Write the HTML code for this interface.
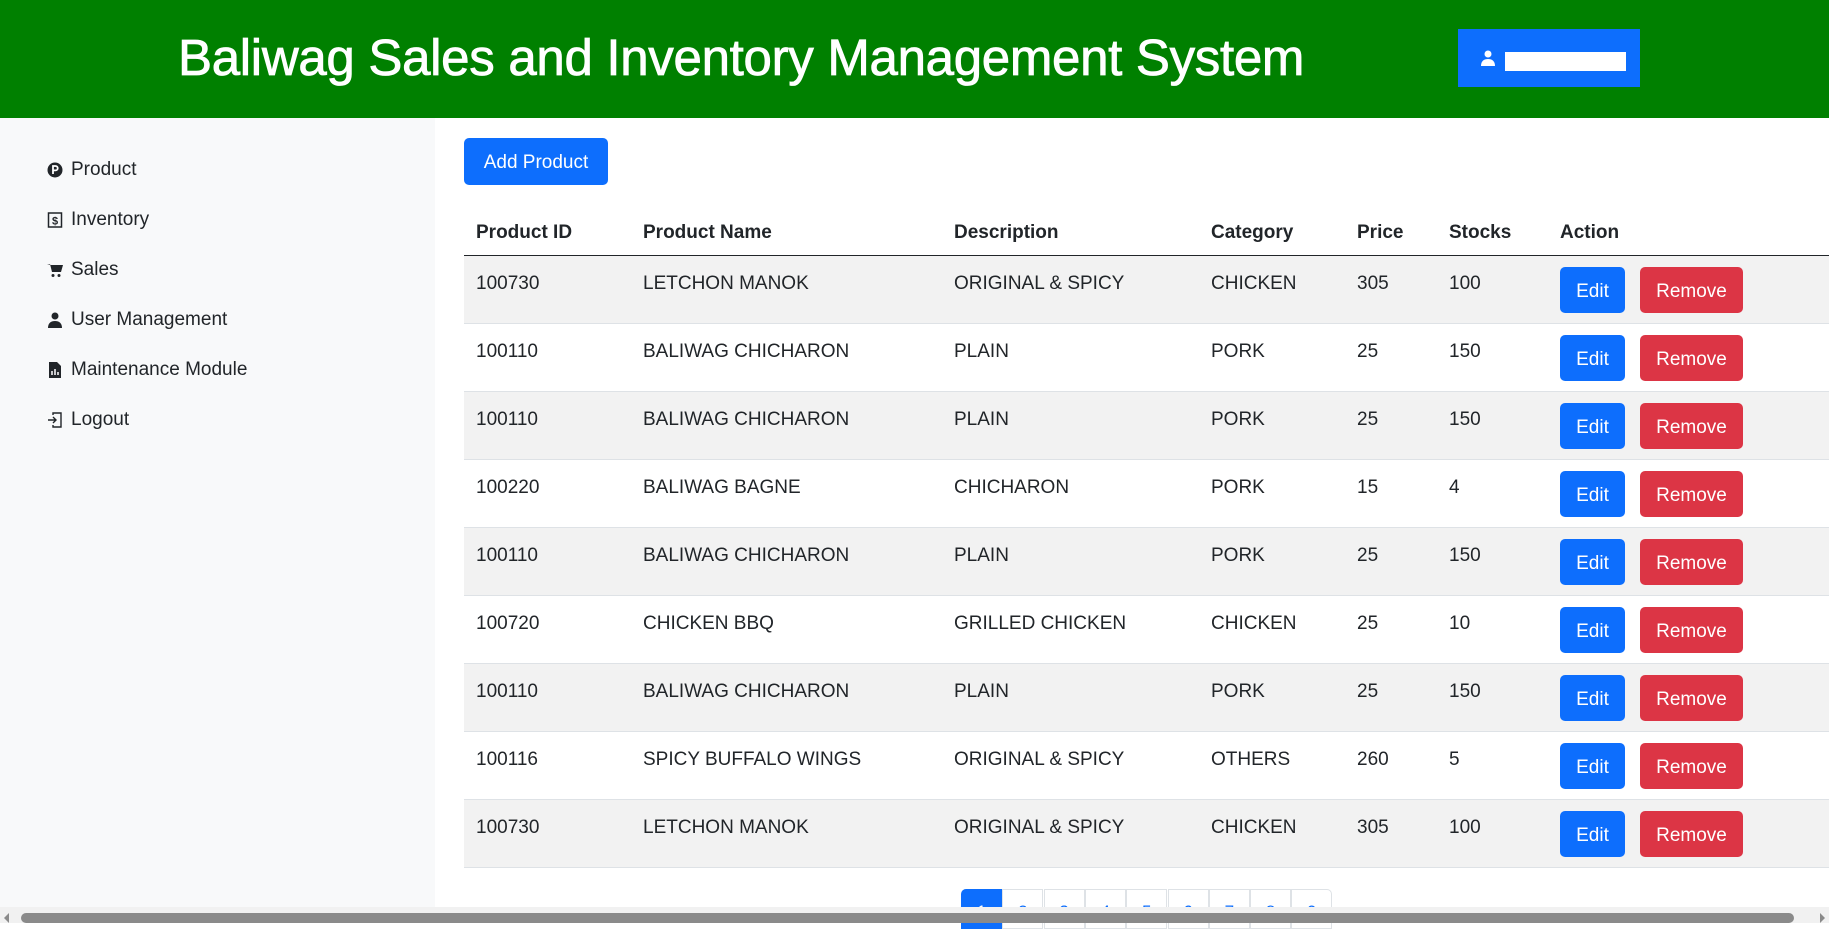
<!DOCTYPE html>
<html><head><meta charset="utf-8"><style>
*{margin:0;padding:0;box-sizing:border-box}
body{width:1829px;height:923px;overflow:hidden;background:#fff;font-family:"Liberation Sans",sans-serif;color:#212529;position:relative}
.hdr{position:absolute;left:0;top:0;width:1829px;height:118px;background:#008000}
.title{position:absolute;left:178px;top:28px;font-size:51px;color:#fff;white-space:nowrap;letter-spacing:-0.3px;-webkit-text-stroke:0.8px #fff}
.ubox{position:absolute;left:1458px;top:29px;width:182px;height:58px;background:#0d6efd}
.side{position:absolute;left:0;top:118px;width:435px;height:805px;background:#f8f9fa}
.nav{position:absolute;left:47px;font-size:19px;display:flex;align-items:center}
.nav svg{width:16px;height:16px;margin-right:8px}
.btn{position:absolute;color:#fff;border-radius:5px;font-size:19px;display:flex;align-items:center;justify-content:center;padding-top:3px}
.blue{background:#0d6efd}.red{background:#dc3545}
.row{position:absolute;left:464px;width:1365px;height:68px;border-bottom:1px solid #dee2e6}
.c{position:absolute;font-size:19px;white-space:nowrap}
.th{font-weight:bold}
.pg{position:absolute;top:889px;height:40px;width:41px;border:1px solid #dee2e6;color:#0d6efd;font-size:17px;text-align:center;padding-top:12px}
</style></head><body>
<div class="hdr">
<div class="title">Baliwag Sales and Inventory Management System</div>
<div class="ubox">
<svg style="position:absolute;left:22px;top:21px" width="16" height="16" viewBox="0 0 16 16"><circle cx="8" cy="4" r="3.5" fill="#fff"/><path d="M1 16c0-5 3-7 7-7s7 2 7 7z" fill="#fff"/></svg>
<div style="position:absolute;left:47px;top:23px;width:121px;height:19px;background:#fff"></div>
</div>
</div>
<div class="side">
<div class="nav" style="top:41px"><svg viewBox="0 0 16 16"><circle cx="8" cy="8" r="7.5" fill="#212529"/><path d="M6 12V4h2.5a2.2 2.2 0 010 4.4H6" stroke="#fff" stroke-width="1.8" fill="none"/></svg>Product</div>
<div class="nav" style="top:91px"><svg viewBox="0 0 16 16"><rect x="1.5" y="1" width="13" height="14" fill="none" stroke="#212529" stroke-width="1.5"/><text x="8" y="12.5" font-size="11" text-anchor="middle" fill="#212529" font-family="Liberation Sans" font-weight="bold">$</text></svg>Inventory</div>
<div class="nav" style="top:141px"><svg viewBox="0 0 16 16"><path d="M0 2h3l2 8h9l2-7H4" fill="#212529"/><circle cx="6" cy="13.5" r="1.5" fill="#212529"/><circle cx="12" cy="13.5" r="1.5" fill="#212529"/></svg>Sales</div>
<div class="nav" style="top:191px"><svg viewBox="0 0 16 16"><circle cx="8" cy="4" r="3.5" fill="#212529"/><path d="M1 16c0-5 3-7 7-7s7 2 7 7z" fill="#212529"/></svg>User Management</div>
<div class="nav" style="top:241px"><svg viewBox="0 0 16 16"><path d="M2 0h8l4 4v12H2z" fill="#212529"/><path d="M5 13V9M8 13V7M11 13v-3" stroke="#fff" stroke-width="1.5"/></svg>Maintenance Module</div>
<div class="nav" style="top:291px"><svg viewBox="0 0 16 16"><path d="M6 3V1h8v14H6v-2M1 8h8M6 5l3 3-3 3" fill="none" stroke="#212529" stroke-width="1.4"/></svg>Logout</div>
</div>
<div class="btn blue" style="left:464px;top:138px;width:144px;height:47px">Add Product</div>
<div class="row" style="top:200px;height:56px;border-bottom:1.5px solid #212529">
<div class="c th" style="left:12px;top:22px">Product ID</div>
<div class="c th" style="left:179px;top:22px">Product Name</div>
<div class="c th" style="left:490px;top:22px">Description</div>
<div class="c th" style="left:747px;top:22px">Category</div>
<div class="c th" style="left:893px;top:22px">Price</div>
<div class="c th" style="left:985px;top:22px">Stocks</div>
<div class="c th" style="left:1096px;top:22px">Action</div>
</div>
<div id="rows"></div>
<script>
var d=[["100730","LETCHON MANOK","ORIGINAL &amp; SPICY","CHICKEN","305","100"],["100110","BALIWAG CHICHARON","PLAIN","PORK","25","150"],["100110","BALIWAG CHICHARON","PLAIN","PORK","25","150"],["100220","BALIWAG BAGNE","CHICHARON","PORK","15","4"],["100110","BALIWAG CHICHARON","PLAIN","PORK","25","150"],["100720","CHICKEN BBQ","GRILLED CHICKEN","CHICKEN","25","10"],["100110","BALIWAG CHICHARON","PLAIN","PORK","25","150"],["100116","SPICY BUFFALO WINGS","ORIGINAL &amp; SPICY","OTHERS","260","5"],["100730","LETCHON MANOK","ORIGINAL &amp; SPICY","CHICKEN","305","100"]];
var xs=[12,179,490,747,893,985],h="";
d.forEach(function(r,i){var t=256+i*68;h+='<div class="row" style="top:'+t+'px;background:'+(i%2?'#fff':'#f2f2f2')+'">';
r.forEach(function(v,j){h+='<div class="c" style="left:'+xs[j]+'px;top:17px">'+v+'</div>'});
h+='<div class="btn blue" style="left:1096px;top:11px;width:65px;height:46px">Edit</div><div class="btn red" style="left:1176px;top:11px;width:103px;height:46px">Remove</div></div>'});
for(var k=0;k<9;k++){var l=961+k*41.3;h+='<div class="pg" style="left:'+l+'px;'+(k==0?'background:#0d6efd;color:#fff;border-color:#0d6efd;border-radius:5px 0 0 0;':'')+(k==8?'border-radius:0 5px 0 0;':'')+'">'+(k+1)+'</div>'}
document.getElementById('rows').innerHTML=h;
</script>
<div style="position:absolute;left:0;top:907px;width:1829px;height:16px;background:#f1f1f1"></div>
<div style="position:absolute;left:21px;top:913px;width:1773px;height:10px;background:#8a8a8a;border-radius:5px"></div>
<div style="position:absolute;left:4px;top:913px;width:0;height:0;border-top:5px solid transparent;border-bottom:5px solid transparent;border-right:5px solid #8a8a8a"></div>
<div style="position:absolute;left:1820px;top:913px;width:0;height:0;border-top:5px solid transparent;border-bottom:5px solid transparent;border-left:5px solid #8a8a8a"></div>
</body></html>
